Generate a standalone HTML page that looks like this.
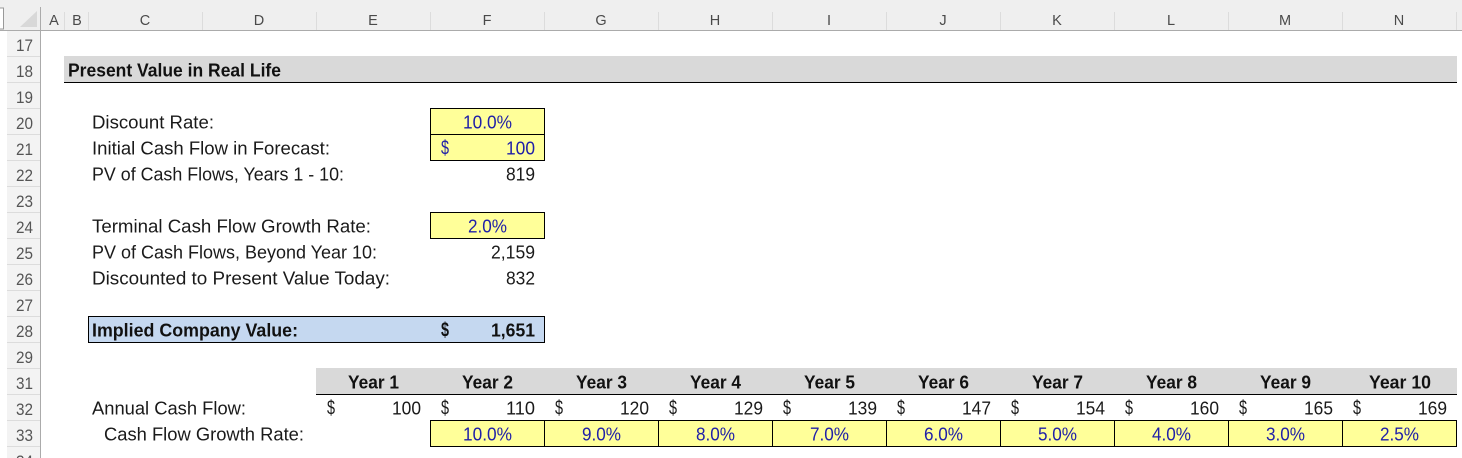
<!DOCTYPE html>
<html><head><meta charset="utf-8"><style>
html,body{margin:0;padding:0;background:#fff;width:1462px;height:458px;overflow:hidden}
svg{display:block}
text{font-family:"Liberation Sans",sans-serif;font-size:18px;fill:#1a1a1a}
.b{font-weight:bold;fill:#111}
.i{fill:#2020a8}
.h{fill:#4a4a4a;font-size:14.5px}
.r{fill:#555;font-size:16.5px}
</style></head><body>
<svg width="1462" height="458" viewBox="0 0 1462 458" xmlns="http://www.w3.org/2000/svg">
<rect x="0" y="0" width="1462" height="30" fill="#efefef"/>
<rect x="7" y="30" width="33" height="428" fill="#f3f3f3"/>
<rect x="0" y="30" width="7" height="428" fill="#fff"/>
<rect x="-2" y="8" width="5.5" height="21" fill="#fff" stroke="#999"/>
<polygon points="20,27 37,27 37,11" fill="#d8d8d8"/>
<rect x="0" y="30" width="1462" height="1" fill="#ababab"/>
<rect x="40" y="7" width="1" height="451" fill="#ababab"/>
<g fill="#dcdcdc">
<rect x="64" y="12" width="1" height="18"/><rect x="88" y="12" width="1" height="18"/><rect x="202" y="12" width="1" height="18"/><rect x="316" y="12" width="1" height="18"/><rect x="430" y="12" width="1" height="18"/><rect x="544" y="12" width="1" height="18"/><rect x="658" y="12" width="1" height="18"/><rect x="772" y="12" width="1" height="18"/><rect x="886" y="12" width="1" height="18"/><rect x="1000" y="12" width="1" height="18"/><rect x="1114" y="12" width="1" height="18"/><rect x="1228" y="12" width="1" height="18"/><rect x="1342" y="12" width="1" height="18"/><rect x="1456" y="12" width="1" height="18"/>
<rect x="7" y="56" width="33" height="1"/><rect x="7" y="82" width="33" height="1"/><rect x="7" y="108" width="33" height="1"/><rect x="7" y="134" width="33" height="1"/><rect x="7" y="160" width="33" height="1"/><rect x="7" y="186" width="33" height="1"/><rect x="7" y="212" width="33" height="1"/><rect x="7" y="238" width="33" height="1"/><rect x="7" y="264" width="33" height="1"/><rect x="7" y="290" width="33" height="1"/><rect x="7" y="316" width="33" height="1"/><rect x="7" y="342" width="33" height="1"/><rect x="7" y="368" width="33" height="1"/><rect x="7" y="394" width="33" height="1"/><rect x="7" y="420" width="33" height="1"/><rect x="7" y="446" width="33" height="1"/>
</g>

<text class="h" x="54" y="25" text-anchor="middle">A</text><text class="h" x="77" y="25" text-anchor="middle">B</text><text class="h" x="145" y="25" text-anchor="middle">C</text><text class="h" x="259" y="25" text-anchor="middle">D</text><text class="h" x="373" y="25" text-anchor="middle">E</text><text class="h" x="487" y="25" text-anchor="middle">F</text><text class="h" x="601" y="25" text-anchor="middle">G</text><text class="h" x="715" y="25" text-anchor="middle">H</text><text class="h" x="829" y="25" text-anchor="middle">I</text><text class="h" x="943" y="25" text-anchor="middle">J</text><text class="h" x="1057" y="25" text-anchor="middle">K</text><text class="h" x="1171" y="25" text-anchor="middle">L</text><text class="h" x="1285" y="25" text-anchor="middle">M</text><text class="h" x="1399" y="25" text-anchor="middle">N</text>

<text class="r" x="16" y="51" textLength="17" lengthAdjust="spacingAndGlyphs">17</text><text class="r" x="16" y="77" textLength="17" lengthAdjust="spacingAndGlyphs">18</text><text class="r" x="16" y="103" textLength="17" lengthAdjust="spacingAndGlyphs">19</text><text class="r" x="16" y="129" textLength="17" lengthAdjust="spacingAndGlyphs">20</text><text class="r" x="16" y="155" textLength="17" lengthAdjust="spacingAndGlyphs">21</text><text class="r" x="16" y="181" textLength="17" lengthAdjust="spacingAndGlyphs">22</text><text class="r" x="16" y="207" textLength="17" lengthAdjust="spacingAndGlyphs">23</text><text class="r" x="16" y="233" textLength="17" lengthAdjust="spacingAndGlyphs">24</text><text class="r" x="16" y="259" textLength="17" lengthAdjust="spacingAndGlyphs">25</text><text class="r" x="16" y="285" textLength="17" lengthAdjust="spacingAndGlyphs">26</text><text class="r" x="16" y="311" textLength="17" lengthAdjust="spacingAndGlyphs">27</text><text class="r" x="16" y="337" textLength="17" lengthAdjust="spacingAndGlyphs">28</text><text class="r" x="16" y="363" textLength="17" lengthAdjust="spacingAndGlyphs">29</text><text class="r" x="16" y="389" textLength="17" lengthAdjust="spacingAndGlyphs">31</text><text class="r" x="16" y="415" textLength="17" lengthAdjust="spacingAndGlyphs">32</text><text class="r" x="16" y="441" textLength="17" lengthAdjust="spacingAndGlyphs">33</text><text class="r" x="16" y="467" textLength="17" lengthAdjust="spacingAndGlyphs">34</text>

<rect x="64" y="56" width="1393" height="26" fill="#d9d9d9"/>
<rect x="64" y="82" width="1393" height="1" fill="#000"/>
<text class="b" x="68" y="76.5" textLength="213" lengthAdjust="spacingAndGlyphs">Present Value in Real Life</text>

<rect x="430.5" y="108.5" width="114" height="52" fill="#ffff99" stroke="#000"/>
<rect x="430" y="134" width="114" height="1" fill="#000"/>
<rect x="430.5" y="212.5" width="114" height="26" fill="#ffff99" stroke="#000"/>
<rect x="88.5" y="316.5" width="456" height="26" fill="#c5d8f0" stroke="#000"/>

<text x="92" y="128.5" textLength="122" lengthAdjust="spacingAndGlyphs">Discount Rate:</text>
<text x="92" y="154.5" textLength="238" lengthAdjust="spacingAndGlyphs">Initial Cash Flow in Forecast:</text>
<text x="92" y="180.5" textLength="252" lengthAdjust="spacingAndGlyphs">PV of Cash Flows, Years 1 - 10:</text>
<text x="92" y="232.5" textLength="279" lengthAdjust="spacingAndGlyphs">Terminal Cash Flow Growth Rate:</text>
<text x="92" y="258.5" textLength="285" lengthAdjust="spacingAndGlyphs">PV of Cash Flows, Beyond Year 10:</text>
<text x="92" y="284.5" textLength="298" lengthAdjust="spacingAndGlyphs">Discounted to Present Value Today:</text>
<text class="b" x="92" y="336.5" textLength="206" lengthAdjust="spacingAndGlyphs">Implied Company Value:</text>
<text x="92" y="414.5" textLength="154" lengthAdjust="spacingAndGlyphs">Annual Cash Flow:</text>
<text x="104" y="440.5" textLength="200" lengthAdjust="spacingAndGlyphs">Cash Flow Growth Rate:</text>

<text class="i" x="463" y="128.5" textLength="49" lengthAdjust="spacingAndGlyphs">10.0%</text>
<text class="i" x="441" y="154.5" textLength="8" lengthAdjust="spacingAndGlyphs" style="font-size:20px">$</text>
<text class="i" x="506" y="154.5" textLength="29" lengthAdjust="spacingAndGlyphs">100</text>
<text x="506" y="180.5" textLength="29" lengthAdjust="spacingAndGlyphs">819</text>
<text class="i" x="468" y="232.5" textLength="39" lengthAdjust="spacingAndGlyphs">2.0%</text>
<text x="491" y="258.5" textLength="44" lengthAdjust="spacingAndGlyphs">2,159</text>
<text x="506" y="284.5" textLength="29" lengthAdjust="spacingAndGlyphs">832</text>
<text class="b" x="441" y="336.5" textLength="8" lengthAdjust="spacingAndGlyphs" style="font-size:20px">$</text>
<text class="b" x="491" y="336.5" textLength="44" lengthAdjust="spacingAndGlyphs">1,651</text>

<rect x="316" y="368" width="1141" height="26" fill="#d9d9d9"/>
<rect x="316" y="394" width="1141" height="1" fill="#000"/>
<text class="b" x="348" y="388.5" textLength="51" lengthAdjust="spacingAndGlyphs">Year 1</text>
<text class="b" x="462" y="388.5" textLength="51" lengthAdjust="spacingAndGlyphs">Year 2</text>
<text class="b" x="576" y="388.5" textLength="51" lengthAdjust="spacingAndGlyphs">Year 3</text>
<text class="b" x="690" y="388.5" textLength="51" lengthAdjust="spacingAndGlyphs">Year 4</text>
<text class="b" x="804" y="388.5" textLength="51" lengthAdjust="spacingAndGlyphs">Year 5</text>
<text class="b" x="918" y="388.5" textLength="51" lengthAdjust="spacingAndGlyphs">Year 6</text>
<text class="b" x="1032" y="388.5" textLength="51" lengthAdjust="spacingAndGlyphs">Year 7</text>
<text class="b" x="1146" y="388.5" textLength="51" lengthAdjust="spacingAndGlyphs">Year 8</text>
<text class="b" x="1260" y="388.5" textLength="51" lengthAdjust="spacingAndGlyphs">Year 9</text>
<text class="b" x="1369" y="388.5" textLength="62" lengthAdjust="spacingAndGlyphs">Year 10</text>

<g style="font-size:18px">
<text x="327" y="414.5" textLength="8" lengthAdjust="spacingAndGlyphs" style="font-size:20px">$</text><text x="392" y="414.5" textLength="29" lengthAdjust="spacingAndGlyphs">100</text>
<text x="441" y="414.5" textLength="8" lengthAdjust="spacingAndGlyphs" style="font-size:20px">$</text><text x="506" y="414.5" textLength="29" lengthAdjust="spacingAndGlyphs">110</text>
<text x="555" y="414.5" textLength="8" lengthAdjust="spacingAndGlyphs" style="font-size:20px">$</text><text x="620" y="414.5" textLength="29" lengthAdjust="spacingAndGlyphs">120</text>
<text x="669" y="414.5" textLength="8" lengthAdjust="spacingAndGlyphs" style="font-size:20px">$</text><text x="734" y="414.5" textLength="29" lengthAdjust="spacingAndGlyphs">129</text>
<text x="783" y="414.5" textLength="8" lengthAdjust="spacingAndGlyphs" style="font-size:20px">$</text><text x="848" y="414.5" textLength="29" lengthAdjust="spacingAndGlyphs">139</text>
<text x="897" y="414.5" textLength="8" lengthAdjust="spacingAndGlyphs" style="font-size:20px">$</text><text x="962" y="414.5" textLength="29" lengthAdjust="spacingAndGlyphs">147</text>
<text x="1011" y="414.5" textLength="8" lengthAdjust="spacingAndGlyphs" style="font-size:20px">$</text><text x="1076" y="414.5" textLength="29" lengthAdjust="spacingAndGlyphs">154</text>
<text x="1125" y="414.5" textLength="8" lengthAdjust="spacingAndGlyphs" style="font-size:20px">$</text><text x="1190" y="414.5" textLength="29" lengthAdjust="spacingAndGlyphs">160</text>
<text x="1239" y="414.5" textLength="8" lengthAdjust="spacingAndGlyphs" style="font-size:20px">$</text><text x="1304" y="414.5" textLength="29" lengthAdjust="spacingAndGlyphs">165</text>
<text x="1353" y="414.5" textLength="8" lengthAdjust="spacingAndGlyphs" style="font-size:20px">$</text><text x="1418" y="414.5" textLength="29" lengthAdjust="spacingAndGlyphs">169</text>
</g>

<rect x="430.5" y="420.5" width="1026" height="26" fill="#ffff99" stroke="#000"/>
<g fill="#000"><rect x="544" y="420" width="1" height="26"/><rect x="658" y="420" width="1" height="26"/><rect x="772" y="420" width="1" height="26"/><rect x="886" y="420" width="1" height="26"/><rect x="1000" y="420" width="1" height="26"/><rect x="1114" y="420" width="1" height="26"/><rect x="1228" y="420" width="1" height="26"/><rect x="1342" y="420" width="1" height="26"/></g>
<text class="i" x="463" y="440.5" textLength="49" lengthAdjust="spacingAndGlyphs">10.0%</text>
<text class="i" x="582" y="440.5" textLength="39" lengthAdjust="spacingAndGlyphs">9.0%</text>
<text class="i" x="696" y="440.5" textLength="39" lengthAdjust="spacingAndGlyphs">8.0%</text>
<text class="i" x="810" y="440.5" textLength="39" lengthAdjust="spacingAndGlyphs">7.0%</text>
<text class="i" x="924" y="440.5" textLength="39" lengthAdjust="spacingAndGlyphs">6.0%</text>
<text class="i" x="1038" y="440.5" textLength="39" lengthAdjust="spacingAndGlyphs">5.0%</text>
<text class="i" x="1152" y="440.5" textLength="39" lengthAdjust="spacingAndGlyphs">4.0%</text>
<text class="i" x="1266" y="440.5" textLength="39" lengthAdjust="spacingAndGlyphs">3.0%</text>
<text class="i" x="1380" y="440.5" textLength="39" lengthAdjust="spacingAndGlyphs">2.5%</text>
</svg>
</body></html>
